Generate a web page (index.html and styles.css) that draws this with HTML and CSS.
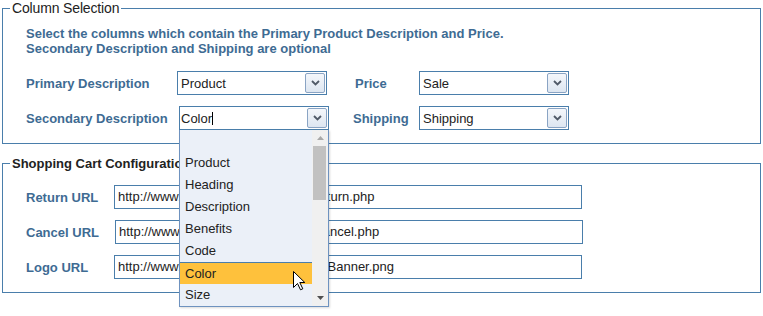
FILE: index.html
```html
<!DOCTYPE html>
<html>
<head>
<meta charset="utf-8">
<link rel="stylesheet" href="styles.css">
</head>
<body>
<fieldset class="fs fs-columns">
  <legend class="lg lg-plain">Column Selection</legend>
  <div class="fs-body">
    <p class="desc">Select the columns which contain the Primary Product Description and Price.<br>Secondary Description and Shipping are optional</p>
    <div class="grid">
      <div class="lbl">Primary Description</div>
      <div class="cell">
        <div class="sel"><span class="sel-text">Product</span><span class="btn"><svg width="9" height="6" viewBox="0 0 9 6"><path d="M1 1 L4.5 4.5 L8 1" fill="none" stroke="#505a68" stroke-width="1.8"/></svg></span></div>
      </div>
      <div class="lbl">Price</div>
      <div class="cell">
        <div class="sel"><span class="sel-text">Sale</span><span class="btn"><svg width="9" height="6" viewBox="0 0 9 6"><path d="M1 1 L4.5 4.5 L8 1" fill="none" stroke="#505a68" stroke-width="1.8"/></svg></span></div>
      </div>

      <div class="lbl">Secondary Description</div>
      <div class="cell">
        <div class="sel sel-open">
          <span class="sel-text sel-text-edit">Color<span class="caret"></span></span><span class="btn"><svg width="9" height="6" viewBox="0 0 9 6"><path d="M1 1 L4.5 4.5 L8 1" fill="none" stroke="#505a68" stroke-width="1.8"/></svg></span>
          <div class="list">
            <div class="items">
              <div class="item">&nbsp;</div>
              <div class="item">Product</div>
              <div class="item">Heading</div>
              <div class="item">Description</div>
              <div class="item">Benefits</div>
              <div class="item">Code</div>
              <div class="item item-hl">Color</div>
              <div class="item">Size</div>
            </div>
            <div class="sb">
              <div class="sb-up"><svg width="7" height="4" viewBox="0 0 7 4"><path d="M0 4 L3.5 0 L7 4 Z" fill="#a8a8a8"/></svg></div>
              <div class="sb-track"><div class="sb-thumb"></div></div>
              <div class="sb-down"><svg width="7" height="4" viewBox="0 0 7 4"><path d="M0 0 L3.5 4 L7 0 Z" fill="#505050"/></svg></div>
            </div>
            <svg class="cursor" width="13" height="20" viewBox="0 0 13 20"><path d="M0.5 0.5 L0.5 16.5 L4.5 12.5 L7.5 18.8 L9.8 17.8 L6.8 11.5 L11.8 11.5 Z" fill="#fff" stroke="#000" stroke-width="1"/></svg>
          </div>
        </div>
      </div>
      <div class="lbl lbl-ship">Shipping</div>
      <div class="cell">
        <div class="sel"><span class="sel-text">Shipping</span><span class="btn"><svg width="9" height="6" viewBox="0 0 9 6"><path d="M1 1 L4.5 4.5 L8 1" fill="none" stroke="#505a68" stroke-width="1.8"/></svg></span></div>
      </div>
    </div>
  </div>
</fieldset>

<fieldset class="fs fs-cart">
  <legend class="lg lg-bold">Shopping Cart Configuration</legend>
  <div class="fs-body fs-body-cart">
    <div class="urow"><span class="ulbl">Return URL</span><span class="inp">http://www.mywebsite.com/orders/return.php</span></div>
    <div class="urow"><span class="ulbl">Cancel URL</span><span class="inp inp-shift">http://www.mywebsite.com/orders/cancel.php</span></div>
    <div class="urow"><span class="ulbl">Logo URL</span><span class="inp">http://www.mywebsite.com/graphics/Banner.png</span></div>
  </div>
</fieldset>
</body>
</html>
```

FILE: styles.css
```css
html {
  margin: 0;
  padding: 0;
  background: #fff;
  min-height: 100%;
  height: 100%;
}
body {
  margin: 0;
  padding: 0 2px;
  min-height: 316px;
  box-sizing: border-box;
  font-family: "Liberation Sans", Arial, sans-serif;
  font-size: 13px;
  color: #222;
}
.fs {
  margin: 0;
  padding: 0;
  border: 1px solid #4a7eab;
  min-width: 0;
}
.fs-cart {
  margin-top: 11px;
}
.lg {
  margin-left: 7px;
  padding: 0 2px;
  line-height: 17px;
  color: #222;
}
.lg-plain {
  font-size: 14px;
  letter-spacing: -0.15px;
  font-weight: normal;
}
.lg-bold {
  font-size: 13px;
  font-weight: bold;
}
.fs-body {
  padding: 9px 0 13px 23px;
}
.fs-body-cart {
  padding-top: 13px;
  display: flex;
  flex-direction: column;
  gap: 11px;
}
.desc {
  margin: 0 0 15px;
  font-weight: bold;
  font-size: 13px;
  line-height: 15px;
  color: #3e6b93;
}
.grid {
  display: grid;
  grid-template-columns: 151px 178px 64px 150px;
  grid-auto-rows: 24px;
  row-gap: 11px;
  align-items: center;
}
.lbl {
  font-weight: bold;
  color: #3e6b93;
  white-space: nowrap;
}
.lbl-ship {
  margin-left: -2px;
}
.cell {
  height: 24px;
}
.sel {
  box-sizing: border-box;
  width: 150px;
  height: 24px;
  border: 1px solid #4a7eab;
  display: flex;
  align-items: center;
  background: #fff;
  position: relative;
}
.sel-open {
  margin-left: 2px;
}
.sel-text {
  flex: 1;
  padding-left: 3px;
  color: #222;
  display: flex;
  align-items: center;
}
.sel-text-edit {
  padding-left: 1px;
}
.caret {
  display: inline-block;
  width: 1px;
  height: 13px;
  background: #000;
}
.btn {
  box-sizing: border-box;
  width: 20px;
  height: 20px;
  margin-right: 1px;
  border: 1px solid #8aa4c4;
  border-radius: 2px;
  background: linear-gradient(#f4f7fb, #dde6f1);
  display: flex;
  align-items: center;
  justify-content: center;
}
.list {
  position: absolute;
  top: 23px;
  left: -1px;
  width: 150px;
  box-sizing: border-box;
  border: 1px solid #6e92bf;
  border-top: none;
  background: #ebf0f8;
  display: flex;
  box-shadow: 1px 1px 2px rgba(0, 0, 0, 0.15);
  z-index: 5;
}
.items {
  width: 132px;
}
.item {
  height: 22px;
  line-height: 22px;
  padding-left: 5px;
  color: #222;
  box-sizing: border-box;
}
.item-hl {
  background: #fec13c;
  border-top: 1px solid #4a7eab;
  line-height: 21px;
}
.sb {
  width: 16px;
  background: #f0f0f0;
  display: flex;
  flex-direction: column;
}
.sb-up, .sb-down {
  height: 17px;
  display: flex;
  align-items: center;
  justify-content: center;
}
.sb-up {
  height: 16px;
}
.sb-track {
  flex: 1;
}
.sb-thumb {
  margin: 0 2px 0 1px;
  height: 54px;
  background: #c1c1c1;
}
.cursor {
  position: absolute;
  left: 113px;
  top: 141px;
}
.urow {
  display: flex;
  align-items: center;
  height: 24px;
}
.ulbl {
  width: 88px;
  font-weight: bold;
  color: #3e6b93;
}
.inp {
  box-sizing: border-box;
  width: 468px;
  height: 24px;
  border: 1px solid #4a7eab;
  padding-left: 3px;
  line-height: 22px;
  color: #222;
  white-space: nowrap;
  overflow: hidden;
}
.inp-shift {
  margin-left: 1px;
}
```
